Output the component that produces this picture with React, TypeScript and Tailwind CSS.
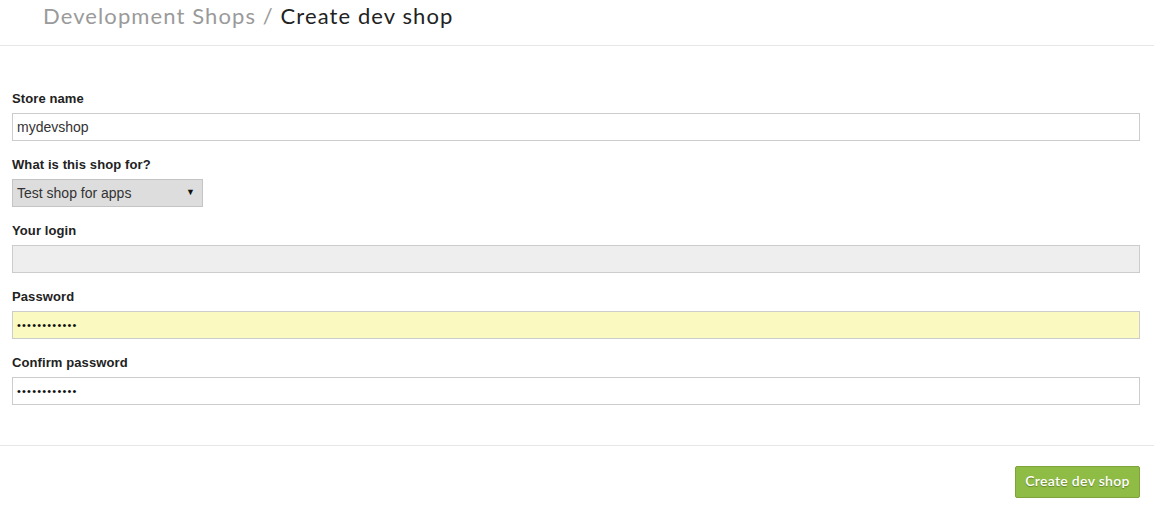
const labelCls = "block text-[13px] font-bold leading-4 text-[#222] mb-[6px] tracking-[0.1px]";
const inputCls = "h-[28px] w-full border border-[#cccccc] px-[4px] flex items-center text-[14px] text-[#333]";

function Dots() {
  return <span className="text-[11px] tracking-[1.2px] text-[#111]">••••••••••••</span>;
}

export default function App() {
  return (
    <div className="w-[1154px] h-[522px] bg-white" style={{ fontFamily: '"Liberation Sans", Arial, sans-serif' }}>
      {/* Header */}
      <div className="h-[46px] border-b border-[#e6e6e6] pl-[43px] pt-[1px]">
        <h1 className="text-[22px] leading-[30px] font-normal tracking-[1.1px]" style={{ fontFamily: 'Lato, "Open Sans", sans-serif' }}>
          <span className="text-[#9a9a9a]">Development Shops / </span>
          <span className="text-[#222]">Create dev shop</span>
        </h1>
      </div>

      {/* Form */}
      <div className="pl-[12px] pr-[14px] pt-[45px] pb-[40px] flex flex-col gap-[16px]">
        <div>
          <label className={labelCls}>Store name</label>
          <div className={inputCls}>mydevshop</div>
        </div>
        <div>
          <label className={labelCls}>What is this shop for?</label>
          <div className="h-[28px] w-[191px] border border-[#c4c4c4] bg-[#dddddd] pl-[4px] pr-[7px] flex items-center justify-between text-[14px] text-[#333]">
            <span>Test shop for apps</span>
            <span className="text-[9px] text-[#111]">▼</span>
          </div>
        </div>
        <div>
          <label className={labelCls}>Your login</label>
          <div className={inputCls + " bg-[#eeeeee]"}></div>
        </div>
        <div>
          <label className={labelCls}>Password</label>
          <div className={inputCls + " bg-[#fafac0]"}>
            <Dots />
          </div>
        </div>
        <div>
          <label className={labelCls}>Confirm password</label>
          <div className={inputCls}>
            <Dots />
          </div>
        </div>
      </div>

      {/* Footer */}
      <div className="border-t border-[#e6e6e6] pt-[20px] pr-[14px] flex justify-end">
        <button
          className="h-[32px] w-[125px] pb-[3px] rounded-[2px] border border-[#7ea33a] bg-[#8fbc44] text-white text-[14px] font-semibold tracking-[0.3px] [text-shadow:0_1px_1px_rgba(0,0,0,0.3)]"
          style={{ fontFamily: 'Lato, "Open Sans", sans-serif' }}
        >
          Create dev shop
        </button>
      </div>
    </div>
  );
}
